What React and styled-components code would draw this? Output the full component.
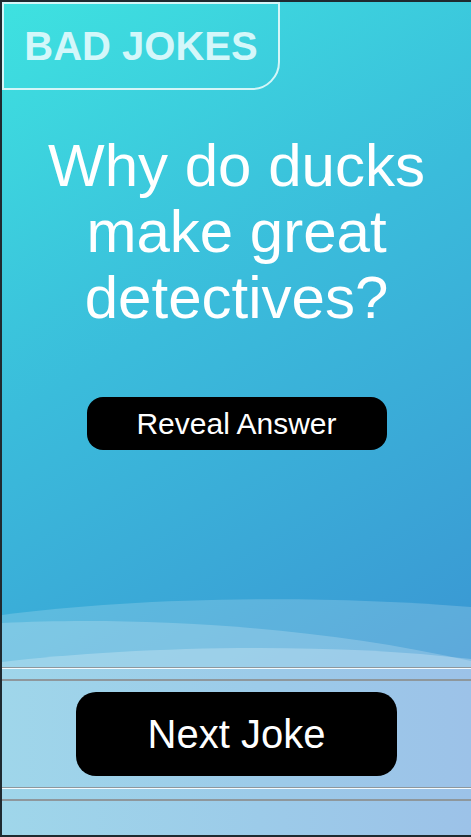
import React from "react";
import styled, { createGlobalStyle } from "styled-components";

const GlobalStyle = createGlobalStyle`
  html, body {
    margin: 0;
    padding: 0;
    background: #1f2a30;
  }
  body {
    font-family: "Liberation Sans", Arial, sans-serif;
  }
`;

const Frame = styled.div`
  width: 471px;
  height: 837px;
  box-sizing: border-box;
  border: 2px solid #1f2a30;
  border-right: 0;
  display: flex;
  flex-direction: column;
  overflow: hidden;
`;

const Stage = styled.section`
  flex: 1;
  display: flex;
  flex-direction: column;
  align-items: center;
  background: linear-gradient(150deg, #3ee2e0 0%, #3abcdb 45%, #3a96d3 100%);
`;

const Badge = styled.div`
  align-self: flex-start;
  width: 278px;
  height: 88px;
  box-sizing: border-box;
  border: 2px solid #d4f6f8;
  border-bottom-right-radius: 28px;
  display: flex;
  align-items: center;
  justify-content: center;
  color: #d4f7fa;
  font-size: 40px;
  font-weight: bold;
`;

const Question = styled.h1`
  margin: 43px 0 0;
  padding: 0 16px;
  color: #fff;
  font-size: 60px;
  font-weight: normal;
  line-height: 66px;
  text-align: center;
`;

const Button = styled.button`
  display: flex;
  align-items: center;
  justify-content: center;
  width: ${(p) => (p.$big ? 321 : 300)}px;
  height: ${(p) => (p.$big ? 84 : 53)}px;
  border: 0;
  border-radius: ${(p) => (p.$big ? 20 : 16)}px;
  background: #000;
  color: #fff;
  font-family: "Liberation Sans", Arial, sans-serif;
  font-size: ${(p) => (p.$big ? 40 : 30)}px;
  cursor: pointer;
`;

const RevealButton = styled(Button)`
  margin-top: 66px;
`;

const Waves = styled.svg`
  display: block;
  margin-top: auto;
  width: 469px;
  height: 72px;
`;

const Footer = styled.section`
  height: 168px;
  display: flex;
  flex-direction: column;
  align-items: center;
  background: linear-gradient(90deg, #9fd6ea 0%, #9ccbe9 55%, #9cc2e8 100%);
`;

const Rail = styled.div`
  align-self: stretch;
  height: 11px;
  border-top: 1px solid #8e979c;
  border-bottom: 2px solid #8e979c;
  box-shadow: inset 0 1px 0 #f4fbff;
`;

const NextButton = styled(Button)`
  margin: 11px 0;
`;

export default function App() {
  return (
    <>
      <GlobalStyle />
      <Frame>
        <Stage>
          <Badge>BAD JOKES</Badge>
          <Question>Why do ducks make great detectives?</Question>
          <RevealButton>Reveal Answer</RevealButton>
          <Waves viewBox="0 0 469 72" preserveAspectRatio="none">
            <path d="M0 20 C 120 4, 300 -2, 469 12 L469 72 L0 72 Z" fill="#fff" fillOpacity="0.18" />
            <path d="M0 28 C 120 22, 300 28, 469 66 L469 72 L0 72 Z" fill="#fff" fillOpacity="0.2" />
            <path d="M0 67 C 120 52, 320 46, 469 64 L469 72 L0 72 Z" fill="#fff" fillOpacity="0.24" />
          </Waves>
        </Stage>
        <Footer>
          <Rail />
          <NextButton $big>Next Joke</NextButton>
          <Rail />
        </Footer>
      </Frame>
    </>
  );
}
